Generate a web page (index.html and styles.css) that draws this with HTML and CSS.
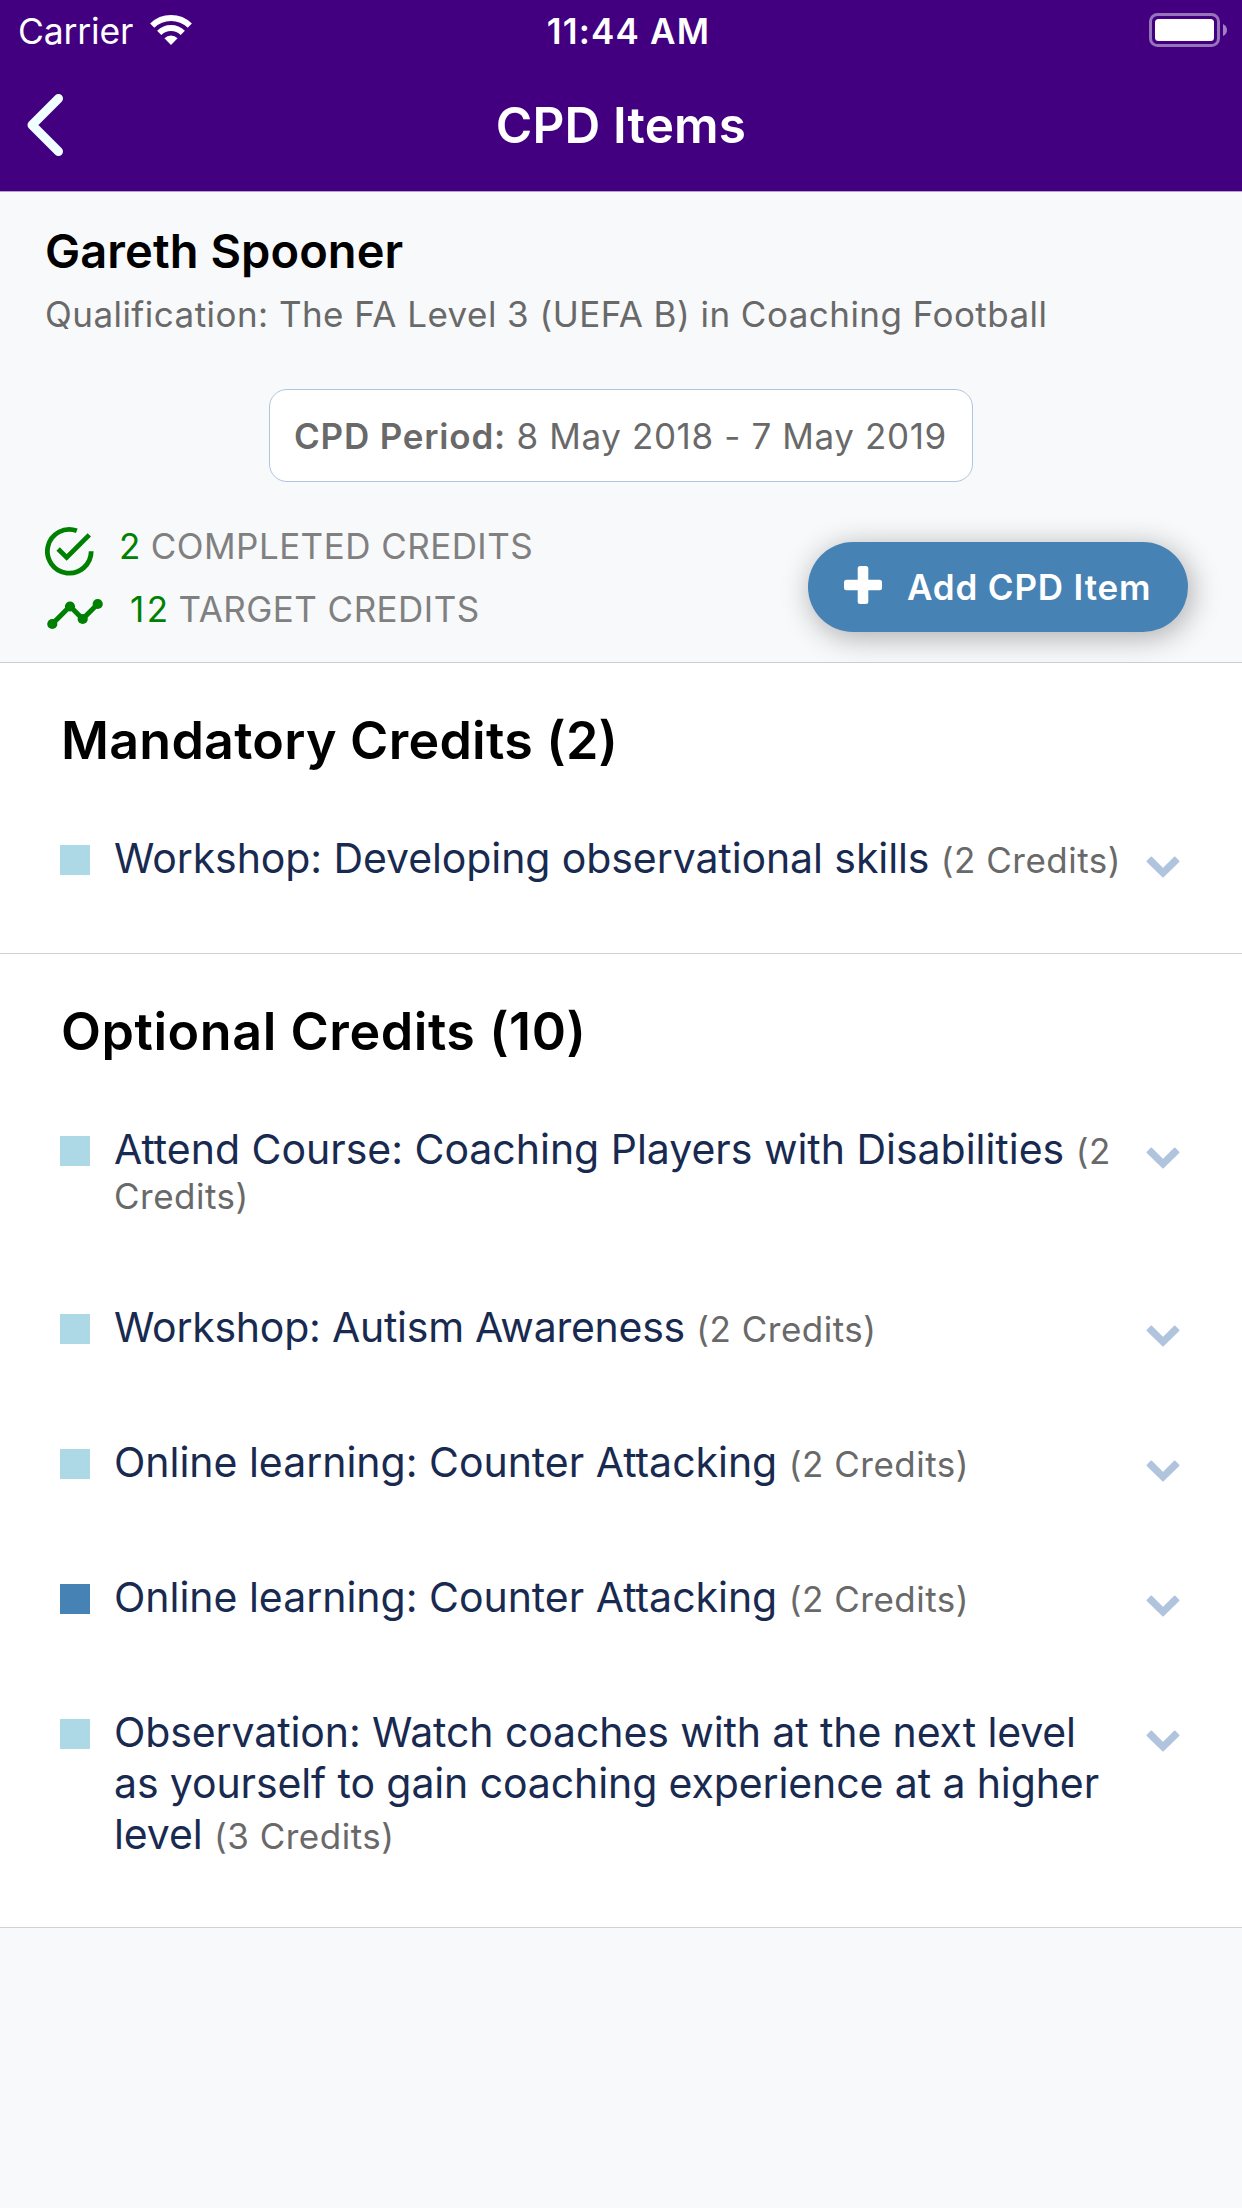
FILE: index.html
```
<!DOCTYPE html>
<html lang="en">
<head>
  <meta charset="utf-8">
  <title>CPD Items</title>
  <link rel="stylesheet" href="styles.css">
</head>
<body>
  <svg width="0" height="0" class="defs" aria-hidden="true">
    <symbol id="chevron" viewBox="0 0 34 22">
      <path d="M5.300 1.400 17 13.100 28.700 1.400 32.600 5.300 17 20.600 1.400 5.300Z" fill="currentColor" stroke="currentColor" stroke-width="1.8" stroke-linejoin="round"/>
    </symbol>
  </svg>

  <header class="header">
    <div class="status">
      <div class="status__carrier">
        <span>Carrier</span>
        <svg class="wifi" viewBox="0 0 44 32" width="44" height="32">
          <g fill="none" stroke="#fff" stroke-width="6">
            <path d="M3.2 11.6A27 27 0 0 1 40.8 11.6"/>
            <path d="M10.2 18.8A17 17 0 0 1 33.8 18.8"/>
          </g>
          <path d="M22 31 15.4 24.2A9.5 9.5 0 0 1 28.6 24.2Z" fill="#fff"/>
        </svg>
      </div>
      <div class="status__time">11:44 AM</div>
      <svg class="battery" viewBox="0 0 78 34" width="78" height="34">
        <rect x="1.5" y="1.5" width="68" height="31" rx="7" fill="none" stroke="#fff" stroke-opacity=".45" stroke-width="3"/>
        <rect x="6" y="6" width="59" height="22" rx="3.5" fill="#fff"/>
        <path d="M74 11Q78 13 78 17T74 23Z" fill="#fff" fill-opacity=".5"/>
      </svg>
    </div>
    <div class="nav">
      <svg class="nav__back" viewBox="0 0 36 62" width="36" height="62">
        <path d="M31.5 4.5 5 31 31.5 57.5" fill="none" stroke="#f0ffff" stroke-width="9" stroke-linecap="round" stroke-linejoin="round"/>
      </svg>
      <h1 class="nav__title">CPD Items</h1>
    </div>
  </header>

  <main>
    <section class="summary">
      <h2 class="summary__name">Gareth Spooner</h2>
      <p class="summary__qualification">Qualification: The FA Level 3 (UEFA B) in Coaching Football</p>
      <div class="period"><b>CPD Period:</b> <span>8 May 2018 - 7 May 2019</span></div>
      <div class="summary__row">
        <div class="totals">
          <div class="total">
            <svg viewBox="0 0 52 63" width="52" height="63" fill="none" stroke="#008000" stroke-width="4.8">
              <path d="M46.2 36.3A21.9 21.9 0 1 1 31.8 15.7"/>
              <path d="M13.1 34 21.7 42.4 44.3 19.9"/>
            </svg>
            <span class="total__count">2</span>
            <span>COMPLETED CREDITS</span>
          </div>
          <div class="total total--target">
            <svg viewBox="0 0 60 63" width="60" height="63" fill="#008000">
              <path d="M7.3 46 25 28.3 37.7 41 52.7 26" fill="none" stroke="#008000" stroke-width="5"/>
              <circle cx="7.3" cy="46" r="5.1"/><circle cx="25" cy="28.5" r="5.1"/>
              <circle cx="37.7" cy="41" r="5.1"/><circle cx="52.7" cy="26" r="5.1"/>
            </svg>
            <span class="total__count">12</span>
            <span>TARGET CREDITS</span>
          </div>
        </div>
        <button class="add" type="button">
          <svg viewBox="0 0 38 38" width="38" height="38" fill="#fff">
            <rect x="13.7" width="10.6" height="38" rx="2.5"/>
            <rect y="13.7" width="38" height="10.6" rx="2.5"/>
          </svg>
          <span>Add CPD Item</span>
        </button>
      </div>
    </section>

    <section class="credits">
      <h2 class="credits__heading">Mandatory Credits (2)</h2>
      <ul class="items">
        <li class="item">
          <span class="swatch"></span>
          <p class="item__text"><span class="item__title developing">Workshop: Developing observational skills </span>(2 Credits)</p>
          <svg class="chevron"><use href="#chevron"/></svg>
        </li>
      </ul>
    </section>

    <section class="credits credits--optional">
      <h2 class="credits__heading">Optional Credits (10)</h2>
      <ul class="items">
        <li class="item">
          <span class="swatch"></span>
          <p class="item__text"><span class="item__title">Attend Course: Coaching Players with Disabilities </span>(2 Credits)</p>
          <svg class="chevron"><use href="#chevron"/></svg>
        </li>
        <li class="item">
          <span class="swatch"></span>
          <p class="item__text"><span class="item__title workshop">Workshop: Autism Awareness </span>(2 Credits)</p>
          <svg class="chevron"><use href="#chevron"/></svg>
        </li>
        <li class="item">
          <span class="swatch"></span>
          <p class="item__text"><span class="item__title">Online learning: Counter Attacking </span>(2 Credits)</p>
          <svg class="chevron"><use href="#chevron"/></svg>
        </li>
        <li class="item">
          <span class="swatch swatch--done"></span>
          <p class="item__text"><span class="item__title">Online learning: Counter Attacking </span>(2 Credits)</p>
          <svg class="chevron"><use href="#chevron"/></svg>
        </li>
        <li class="item">
          <span class="swatch"></span>
          <p class="item__text"><span class="item__title observation">Observation: Watch coaches with at the next level as yourself to gain coaching experience at a higher level </span>(3 Credits)</p>
          <svg class="chevron"><use href="#chevron"/></svg>
        </li>
      </ul>
    </section>
  </main>
</body>
</html>
```
FILE: styles.css
```
* { box-sizing: border-box; margin: 0; padding: 0; }

body {
  min-height: 100vh;
  background: #f8f9fb;
  color: #000;
  font-family: Inter, "Liberation Sans", sans-serif;
  font-size: 35px;
}

svg { display: block; flex: none; }
.defs { position: absolute; }

/* Header */
.header {
  height: 192px;
  background: #420080;
  border-bottom: 1px solid #b5a3cb;
  color: #fff;
}

.status {
  display: grid;
  grid-template-columns: 1fr auto 1fr;
  height: 62px;
  padding: 0 15px 0 18px;
  line-height: 62px;
}

.status__carrier {
  display: flex;
  gap: 16px;
  font-size: 35.5px;
  line-height: 64px;
  letter-spacing: -0.17px;
}
.wifi { margin-top: 14px; }

.status__time {
  padding-left: 12px;
  font-weight: 600;
  letter-spacing: 1.2px;
}

.battery { justify-self: end; margin-top: 13px; }

.nav {
  display: grid;
  grid-template-columns: 1fr auto 1fr;
  padding: 0 27px;
}
.nav__back { margin-top: 32px; }
.nav__title {
  font-size: 49.5px;
  font-weight: 600;
  line-height: 126px;
  letter-spacing: 0.14px;
}

/* Summary */
.summary {
  height: 471px;
  padding: 31px 54px 0 45px;
  overflow: hidden;
  border-bottom: 1px solid #cbcdd0;
}

.summary__name {
  font-size: 47px;
  font-weight: 600;
  line-height: 56px;
  letter-spacing: 0.07px;
}

.summary__qualification {
  margin-top: 11px;
  color: #696969;
  line-height: 48px;
  letter-spacing: 0.46px;
}

.period {
  width: 704px;
  height: 93px;
  margin: 51px 0 0 224px;
  padding-left: 24px;
  border: 1px solid #b0c4de;
  border-radius: 18px;
  background: #fff;
  color: #696969;
  line-height: 93px;
  letter-spacing: 0.62px;
  white-space: nowrap;
}
.period b { font-weight: 600; letter-spacing: 0.8px; }

.summary__row {
  display: flex;
  justify-content: space-between;
  margin-top: 33px;
}

.total {
  display: flex;
  color: #808080;
  line-height: 63px;
  letter-spacing: 0.45px;
}
.total__count {
  margin: 0 10px 0 22px;
  color: #008000;
}
.total--target .total__count {
  margin: 0 8px 0 25px;
  letter-spacing: 2.5px;
}

.add {
  display: flex;
  align-items: center;
  gap: 25px;
  width: 380px;
  height: 90px;
  margin-top: 27px;
  padding-left: 36px;
  border: 0;
  border-radius: 45px;
  background: #4682b4;
  box-shadow: 3px 5px 30px rgba(0, 0, 0, 0.32);
  color: #fff;
  font: 600 35px/90px Inter, "Liberation Sans", sans-serif;
  letter-spacing: 0.84px;
  white-space: nowrap;
}
.add svg { margin-bottom: 4px; }

/* Credit lists */
.credits {
  padding: 46px 63px 69px 60px;
  border-bottom: 1px solid #d0d3d6;
  background: #fff;
}
.credits--optional { padding-bottom: 67px; }

.credits__heading {
  padding-left: 1px;
  font-size: 52px;
  font-weight: 600;
  line-height: 64px;
  letter-spacing: 0.25px;
}
.credits--optional .credits__heading { letter-spacing: 0.56px; }

.items {
  display: grid;
  gap: 84px;
  margin-top: 60px;
  list-style: none;
}

.item {
  display: grid;
  grid-template-columns: 30px 1009px 34px;
  column-gap: 24px;
  align-items: start;
}

.swatch {
  height: 30px;
  margin-top: 12px;
  background: #add8e6;
}
.swatch--done { background: #4682b4; }

.item__text {
  color: #696969;
  line-height: 43px;
  letter-spacing: 0.5px;
}

.item__title {
  color: #192a50;
  font-size: 41px;
  line-height: 51px;
  letter-spacing: -0.02px;
}
.developing { letter-spacing: -0.09px; }
.workshop { letter-spacing: -0.25px; }
.observation { letter-spacing: -0.11px; }

.chevron {
  width: 34px;
  height: 22px;
  margin: 23px 0 0 -1px;
  color: #b0c4de;
}
```
